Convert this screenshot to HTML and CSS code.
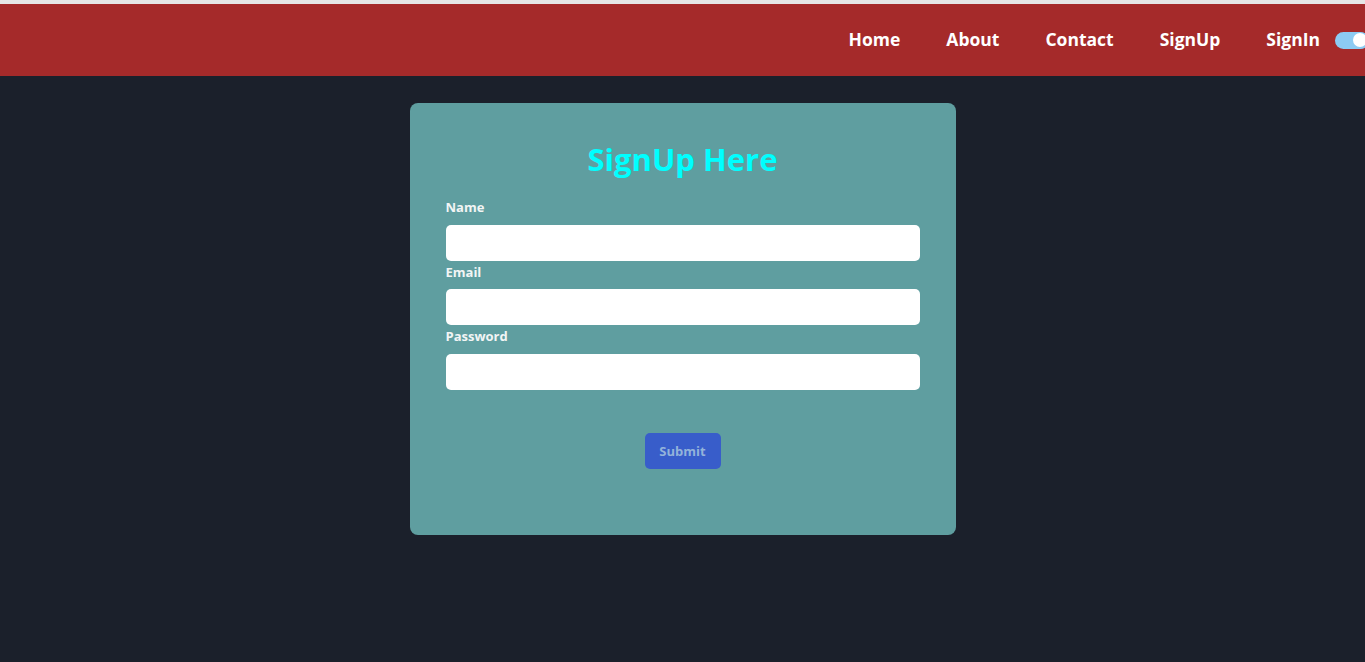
FILE: index.html
```html
<!DOCTYPE html>
<html lang="en">
<head>
<meta charset="utf-8">
<title>SignUp</title>
<link rel="stylesheet" href="styles.css">
</head>
<body>
<header class="navbar">
  <nav class="nav-links">
    <a class="nav-link" href="#">Home</a>
    <a class="nav-link" href="#">About</a>
    <a class="nav-link" href="#">Contact</a>
    <a class="nav-link" href="#">SignUp</a>
    <a class="nav-link" href="#">SignIn</a>
  </nav>
  <span class="toggle"><span class="knob"></span></span>
</header>
<main class="page">
  <form class="card">
    <h1 class="title">SignUp Here</h1>
    <div class="field">
      <label class="label" for="name">Name</label>
      <input class="input" id="name" type="text">
    </div>
    <div class="field">
      <label class="label" for="email">Email</label>
      <input class="input" id="email" type="email">
    </div>
    <div class="field">
      <label class="label" for="password">Password</label>
      <input class="input" id="password" type="password">
    </div>
    <div class="actions">
      <button class="submit" type="button">Submit</button>
    </div>
  </form>
</main>
</body>
</html>
```
FILE: styles.css
```css
* { box-sizing: border-box; }
html, body { margin: 0; padding: 0; }
body {
  background: #1b202b;
  font-family: "Open Sans", "Noto Sans", sans-serif;
  border-top: 4px solid #e6e6e6;
  height: 662px;
  overflow: hidden;
}
.navbar {
  height: 72px;
  background: #a52a2a;
  display: flex;
  align-items: center;
  justify-content: flex-end;
  overflow: hidden;
}
.nav-links {
  display: flex;
  gap: 46px;
  padding-bottom: 2px;
}
.nav-link {
  color: #ffffff;
  text-decoration: none;
  font-weight: 700;
  font-size: 17.5px;
}
.toggle {
  width: 34px;
  height: 17px;
  border-radius: 9px;
  background: #8ccbf3;
  margin-left: 15px;
  margin-right: -4px;
  display: flex;
  align-items: center;
  justify-content: flex-end;
  padding-right: 2px;
  flex-shrink: 0;
}
.knob {
  width: 14px;
  height: 14px;
  border-radius: 50%;
  background: #ffffff;
}
.page {
  display: flex;
  justify-content: center;
  padding-top: 27px;
}
.card {
  width: 546px;
  background: #5f9ea0;
  border-radius: 8px;
  padding: 38px 36px 66px;
}
.title {
  margin: 0 0 19px;
  text-align: center;
  color: #00ffff;
  font-size: 31px;
  line-height: 36px;
  font-weight: 700;
}
.field { display: flex; flex-direction: column; }
.label {
  color: #f2f5f5;
  font-size: 13px;
  line-height: 20.5px;
  font-weight: 700;
  padding-top: 1px;
  margin-bottom: 7px;
}
.input {
  height: 36px;
  border: none;
  border-radius: 5px;
  background: #ffffff;
  margin: 0;
  outline: none;
}
.actions {
  display: flex;
  justify-content: center;
  margin-top: 43px;
}
.submit {
  width: 76px;
  height: 36px;
  border: none;
  border-radius: 5px;
  background: #385dca;
  color: #93b3da;
  font-family: inherit;
  font-size: 13px;
  font-weight: 700;
}
```
